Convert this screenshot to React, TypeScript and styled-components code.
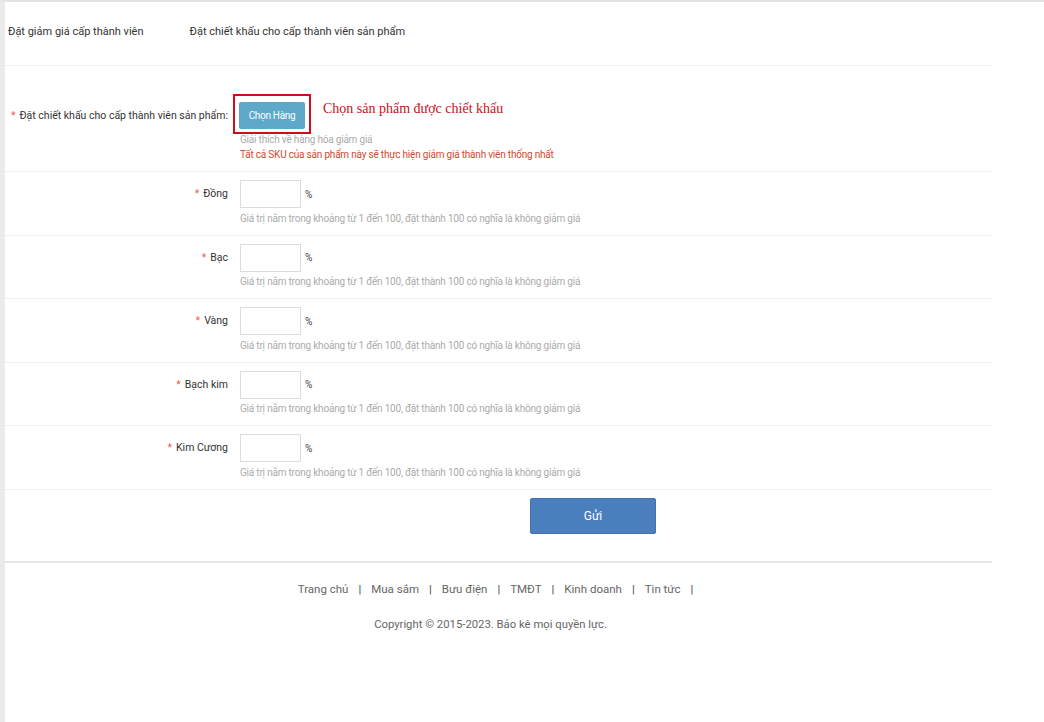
import React from "react";
import styled, { createGlobalStyle } from "styled-components";

const Global = createGlobalStyle`
  html, body { margin: 0; padding: 0; background: #fff; }
  body { font-family: Roboto, "Noto Sans", "Liberation Sans", sans-serif; color: #333; }
  * { box-sizing: border-box; }
`;

const Page = styled.div`
  min-height: 722px;
  border-top: 2px solid #e4e4e4;
  border-left: 5px solid #ebebeb;
`;

const Main = styled.div`
  width: 987px;
`;

const Tabs = styled.div`
  display: flex;
  height: 64px;
  align-items: center;
  padding-left: 3px;
  padding-bottom: 4px;
  border-bottom: 1px solid #efefef;
  gap: 46px;
`;

const Tab = styled.div`
  font-size: 11px;
  color: #333;
`;

const Form = styled.div`
  padding-top: 27.5px;
`;

const Row = styled.div`
  display: grid;
  grid-template-columns: 223px 1fr;
  column-gap: 12px;
  padding: 8px 0 9px;
  border-bottom: 1px solid #efefef;
`;

const Label = styled.div`
  font-size: 10.5px;
  color: #333;
  text-align: right;
  height: 28px;
  line-height: 28px;
  white-space: nowrap;
`;

const Star = styled.span`
  color: #e9604a;
  margin-right: 4px;
`;

const Control = styled.div`
  display: flex;
  flex-direction: column;
`;

const Line = styled.div`
  display: flex;
  align-items: center;
  height: 28px;
`;

const PickWrap = styled.div`
  position: relative;
  margin-left: -1px;
`;

const Highlight = styled.div`
  position: absolute;
  left: -6px;
  top: -8px;
  right: -6px;
  bottom: -5px;
  border: 2px solid #d40b1e;
  pointer-events: none;
`;

const PickButton = styled.button`
  height: 27px;
  width: 66px;
  border: none;
  border-radius: 2px;
  background: #5ea8c9;
  color: #fff;
  font-family: inherit;
  font-size: 10px;
  letter-spacing: -0.3px;
  padding: 0;
`;

const Note = styled.span`
  margin-left: 18px;
  margin-top: -13px;
  font-family: "Liberation Serif", "DejaVu Serif", serif;
  font-size: 14px;
  color: #c8101b;
`;

const Hint = styled.div<{ $warn?: boolean }>`
  font-size: 10px;
  letter-spacing: -0.2px;
  line-height: 15px;
  color: ${(p) => (p.$warn ? "#cf4a2e" : "#ababab")};
  white-space: nowrap;
`;

const Hints = styled.div`
  margin-top: 2.6px;
`;

const Input = styled.input`
  width: 61px;
  height: 28px;
  border: 1px solid #dcdcdc;
  border-radius: 0;
  padding: 0 4px;
  outline: none;
`;

const Unit = styled.span`
  font-size: 10px;
  color: #444;
  margin-left: 4px;
`;

const Submit = styled.div`
  padding: 8px 0 27px 525px;
  border-bottom: 2px solid #e6e6e6;
`;

const SubmitButton = styled.button`
  width: 126px;
  height: 36px;
  border: 1px solid #4272ad;
  border-radius: 2px;
  background: #4a7ebd;
  color: #fff;
  font-family: inherit;
  font-size: 12px;
`;

const Footer = styled.div`
  padding-top: 18px;
  text-align: center;
  font-size: 11.5px;
  color: #666;
`;

const Links = styled.div`
  display: flex;
  justify-content: center;
  line-height: 16px;
  padding-left: 4px;
`;

const FootLink = styled.span`
  &::after {
    content: "|";
    margin: 0 10px;
    color: #444;
  }
`;

const Copy = styled.div`
  margin-top: 20px;
  line-height: 16px;
  padding-right: 16px;
  font-size: 11.3px;
`;

const levels = ["Đồng", "Bạc", "Vàng", "Bạch kim", "Kim Cương"];
const links = ["Trang chủ", "Mua sắm", "Bưu điện", "TMĐT", "Kinh doanh", "Tin tức"];

export default function App() {
  return (
    <>
      <Global />
      <Page>
        <Main>
          <Tabs>
            <Tab>Đặt giảm giá cấp thành viên</Tab>
            <Tab>Đặt chiết khấu cho cấp thành viên sản phẩm</Tab>
          </Tabs>
          <Form>
            <Row>
              <Label>
                <Star>*</Star>Đặt chiết khấu cho cấp thành viên sản phẩm:
              </Label>
              <Control>
                <Line>
                  <PickWrap>
                    <PickButton>Chọn Hàng</PickButton>
                    <Highlight />
                  </PickWrap>
                  <Note>Chọn sản phẩm được chiết khấu</Note>
                </Line>
                <Hints>
                  <Hint>Giải thích về hàng hóa giảm giá</Hint>
                  <Hint $warn>Tất cả SKU của sản phẩm này sẽ thực hiện giảm giá thành viên thống nhất</Hint>
                </Hints>
              </Control>
            </Row>
            {levels.map((l) => (
              <Row key={l}>
                <Label>
                  <Star>*</Star>
                  {l}
                </Label>
                <Control>
                  <Line>
                    <Input />
                    <Unit>%</Unit>
                  </Line>
                  <Hints>
                    <Hint>Giá trị nằm trong khoảng từ 1 đến 100, đặt thành 100 có nghĩa là không giảm giá</Hint>
                  </Hints>
                </Control>
              </Row>
            ))}
            <Submit>
              <SubmitButton>Gửi</SubmitButton>
            </Submit>
          </Form>
          <Footer>
            <Links>
              {links.map((l) => (
                <FootLink key={l}>{l}</FootLink>
              ))}
            </Links>
            <Copy>Copyright © 2015-2023. Bảo kê mọi quyền lực.</Copy>
          </Footer>
        </Main>
      </Page>
    </>
  );
}
